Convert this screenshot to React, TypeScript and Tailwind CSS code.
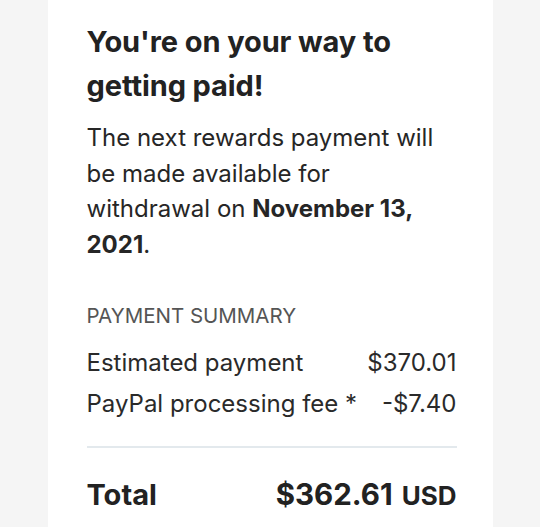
import React from "react";

export default function App() {
  return (
    <div
      className="w-[540px] h-[527px] bg-[#f5f5f5] flex justify-center overflow-hidden"
      style={{ fontFamily: "Inter, 'Noto Sans', sans-serif" }}
    >
      <div className="w-[445px] bg-white pl-[39px] pr-[36px] pt-[20px] text-[#222]">
        <h1 className="text-[29px] font-bold leading-[44px] tracking-[-0.1px]">
          You're on your way to getting paid!
        </h1>
        <p className="mt-[12px] text-[24px] leading-[35.5px] text-[#262626] pr-[8px]">
          The next rewards payment will be made available for withdrawal on{" "}
          <span className="font-bold">November 13, 2021</span>.
        </p>
        <div className="mt-[40px] text-[20.5px] leading-[28px] text-[#555]">
          PAYMENT SUMMARY
        </div>
        <div className="mt-[12px] text-[24px] leading-[41px] text-[#2a2a2a]">
          <div className="flex justify-between">
            <span>Estimated payment</span>
            <span>$370.01</span>
          </div>
          <div className="flex justify-between">
            <span>PayPal processing fee *</span>
            <span>-$7.40</span>
          </div>
        </div>
        <div className="mt-[22px] h-[2px] bg-[#e3e9ed]" />
        <div className="mt-[28px] flex justify-between items-baseline leading-[36px] font-bold text-[#222]">
          <span className="text-[29px]">Total</span>
          <span className="flex items-baseline gap-[9px]">
            <span className="text-[29.5px]">$362.61</span>
            <span className="text-[26px]">USD</span>
          </span>
        </div>
      </div>
    </div>
  );
}
